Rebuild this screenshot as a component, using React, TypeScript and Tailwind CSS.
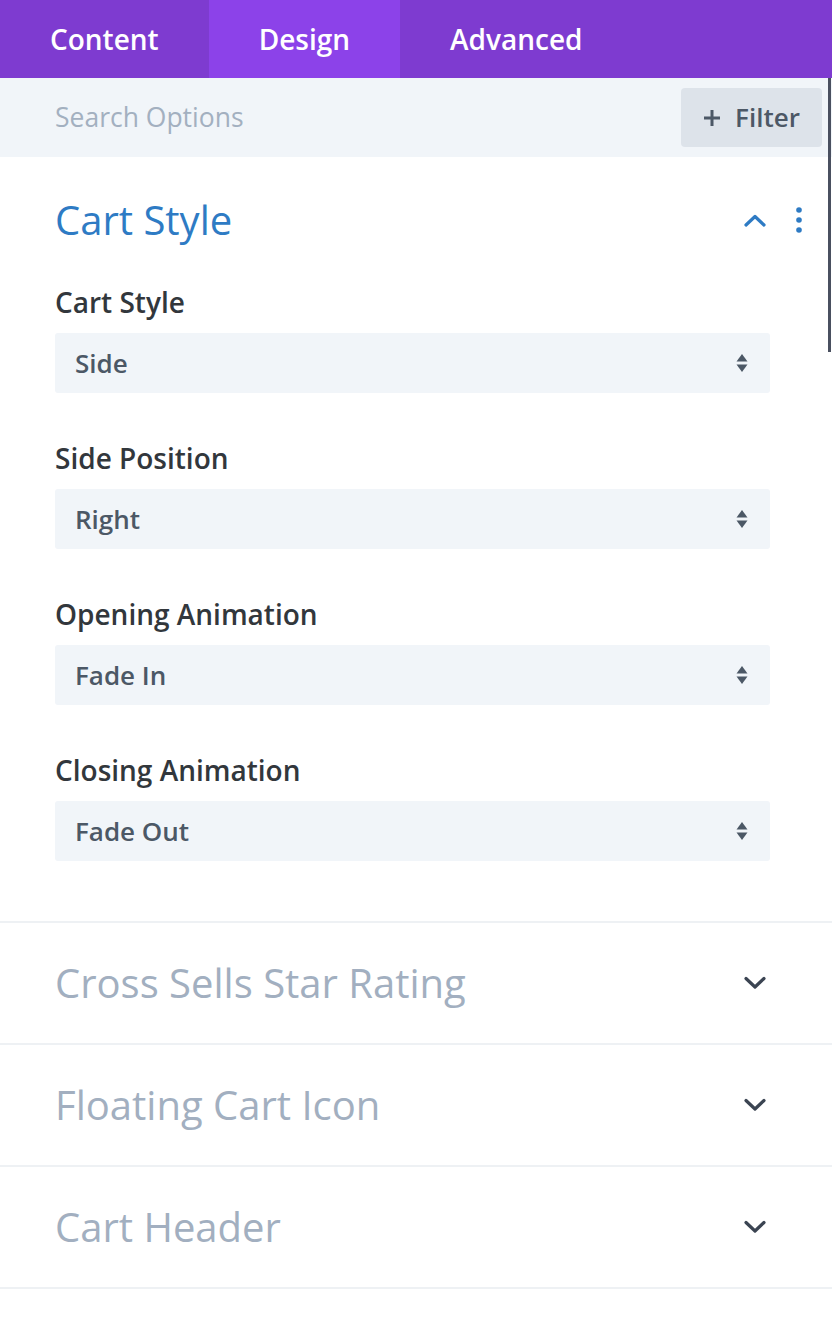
import { useState } from "react";

const tabs = ["Content", "Design", "Advanced"];

const fields = [
  { label: "Cart Style", value: "Side" },
  { label: "Side Position", value: "Right" },
  { label: "Opening Animation", value: "Fade In" },
  { label: "Closing Animation", value: "Fade Out" },
];

const groups = ["Cross Sells Star Rating", "Floating Cart Icon", "Cart Header"];

function SelectArrows() {
  return (
    <svg width="12" height="20" viewBox="0 0 12 20" fill="#4c5866">
      <path d="M6 1 L11.5 8.5 H0.5 Z" />
      <path d="M6 19 L11.5 11.5 H0.5 Z" />
    </svg>
  );
}

function Chevron({ up, color }: { up?: boolean; color: string }) {
  return (
    <svg width="24" height="14" viewBox="0 0 24 14" fill="none">
      <path
        d={up ? "M3 12 L12 3.5 L21 12" : "M3 2.5 L12 11 L21 2.5"}
        stroke={color}
        strokeWidth="3.2"
        strokeLinecap="round"
        strokeLinejoin="round"
      />
    </svg>
  );
}

function Field({ label, value }: { label: string; value: string }) {
  return (
    <div className="flex flex-col">
      <div className="h-8 text-[28px] leading-8 font-semibold text-[#32373c]">{label}</div>
      <div className="mt-[15px] h-[60px] rounded-[3px] bg-[#f1f5f9] flex items-center justify-between pl-5 pr-[22px]">
        <span className="text-[26px] font-semibold text-[#4c5866]">{value}</span>
        <SelectArrows />
      </div>
    </div>
  );
}

export default function App() {
  const [active, setActive] = useState(1);

  return (
    <div className="relative w-[832px] min-h-[1318px] bg-white font-['Open_Sans',sans-serif]">
      {/* tab bar */}
      <div className="flex h-[78px] bg-[#7e3bd0]">
        {tabs.map((t, i) => (
          <button
            key={t}
            onClick={() => setActive(i)}
            className={
              "px-[50px] text-[28px] font-semibold text-white " +
              (i === active ? "bg-[#8c42e9]" : "")
            }
          >
            {t}
          </button>
        ))}
      </div>

      {/* search row */}
      <div className="flex h-[79px] items-center justify-between bg-[#f1f5f9] pl-[55px] pr-[10px]">
        <span className="text-[26.5px] text-[#a3b0c0]">Search Options</span>
        <button className="flex h-[59px] w-[141px] items-center justify-center gap-[14px] rounded-[4px] bg-[#dde3ea] text-[26px] font-semibold text-[#4c5866]">
          <svg width="18" height="18" viewBox="0 0 18 18">
            <path d="M9 1 V17 M1 9 H17" stroke="#4c5866" strokeWidth="3" />
          </svg>
          Filter
        </button>
      </div>

      {/* open group */}
      <div className="border-b-2 border-[#eef1f4] pl-[55px] pr-[62px] pt-[41px] pb-[60px]">
        <div className="flex h-11 items-center justify-between">
          <h2 className="text-[40px] leading-[44px] text-[#2e7bc4]">Cart Style</h2>
          <div className="-mr-[32px] flex items-center gap-[29px]">
            <Chevron up color="#2e7bc4" />
            <svg width="6" height="26" viewBox="0 0 6 26" fill="#2e7bc4">
              <circle cx="3" cy="3" r="2.8" />
              <circle cx="3" cy="13" r="2.8" />
              <circle cx="3" cy="23" r="2.8" />
            </svg>
          </div>
        </div>
        <div className="mt-11 flex flex-col gap-[49px]">
          {fields.map((f) => (
            <Field key={f.label} label={f.label} value={f.value} />
          ))}
        </div>
      </div>

      {/* collapsed groups */}
      {groups.map((g) => (
        <div
          key={g}
          className="flex h-[122px] items-center justify-between border-b-2 border-[#eef1f4] pl-[55px] pr-[65px]"
        >
          <span className="text-[40px] text-[#a2afc0]">{g}</span>
          <Chevron color="#3b4452" />
        </div>
      ))}

      {/* scrollbar */}
      <div className="absolute right-[1px] top-[78px] h-[274px] w-[3px] bg-[#4a5060]" />
    </div>
  );
}
